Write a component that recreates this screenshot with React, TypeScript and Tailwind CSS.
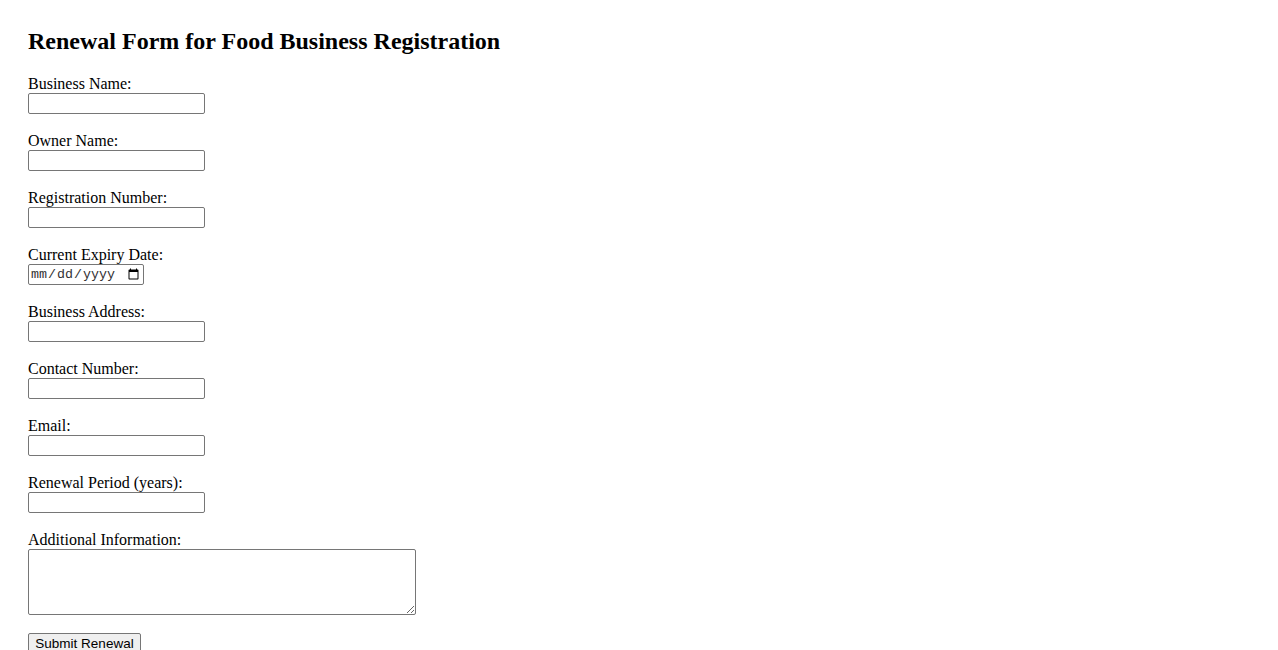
const fields = [
  { label: "Business Name:", type: "text" },
  { label: "Owner Name:", type: "text" },
  { label: "Registration Number:", type: "text" },
  { label: "Current Expiry Date:", type: "date" },
  { label: "Business Address:", type: "text" },
  { label: "Contact Number:", type: "tel" },
  { label: "Email:", type: "email" },
  { label: "Renewal Period (years):", type: "number" },
];

export default function App() {
  return (
    <div className="min-h-screen bg-white pl-[28px] pt-[27px] text-black [font-family:'Liberation_Serif',serif]">
      <h2 className="h-[28px] text-[24px] font-bold leading-[28px]">
        Renewal Form for Food Business Registration
      </h2>
      <form className="mt-[20px] flex flex-col items-start">
        {fields.map((f) => (
          <div key={f.label} className="mb-[18px] flex flex-col items-start">
            <label className="h-[18px] text-[16px] leading-[18px]">{f.label}</label>
            {f.type === "date" ? (
              <input
                type="date"
                className="box-border h-[21px] w-[116px] rounded-[2px] border border-[#767676] bg-white px-[1px] text-[13.33px] leading-[17px] text-[#333] [font-family:'Liberation_Mono',monospace]"
              />
            ) : (
              <input
                type={f.type === "number" ? "text" : f.type}
                className="box-border h-[21px] w-[177px] rounded-[2px] border border-[#767676] bg-white px-[2px] text-[13.33px] [font-family:'Liberation_Sans',sans-serif]"
              />
            )}
          </div>
        ))}
        <div className="mb-[18px] flex flex-col items-start">
          <label className="h-[18px] text-[16px] leading-[18px]">Additional Information:</label>
          <textarea className="box-border h-[66px] w-[388px] rounded-[2px] border border-[#767676] bg-white p-[2px] text-[13.33px] [font-family:'Liberation_Mono',monospace]" />
        </div>
        <button
          type="button"
          className="box-border h-[21px] w-[113px] rounded-[2px] border border-[#767676] bg-[#efefef] px-[6px] text-[13.5px] leading-[17px] [font-family:'Liberation_Sans',sans-serif]"
        >
          Submit Renewal
        </button>
      </form>
    </div>
  );
}
